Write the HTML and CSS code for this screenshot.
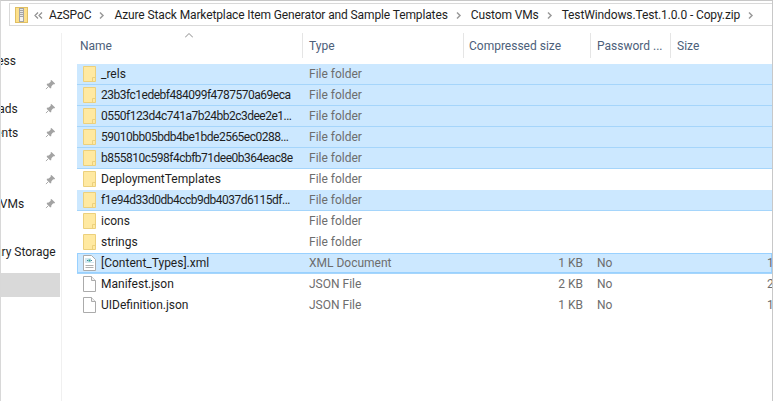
FILE: index.html
```html
<!DOCTYPE html>
<html>
<head>
  <title>TestWindows.Test.1.0.0 - Copy.zip</title>
  <link rel="stylesheet" href="styles.css">
</head>
<body>
  <svg class="defs" width="0" height="0">
    <symbol id="folder" viewBox="0 0 13 16">
      <path d="M0.500 0.500H12.500V15.500H0.500Z" fill="#ffe9a1" stroke="#ecd07c"/>
      <path d="M9.500 15V11.500H12" fill="none" stroke="#ecd07c"/>
    </symbol>
    <symbol id="page" viewBox="0 0 13 16">
      <path d="M0.500 0.500H8.500L12.500 4.500V15.500H0.500Z" fill="#fff" stroke="#ababab"/>
      <path d="M8.500 0.500V4.500H12.500" fill="#f0f0f0" stroke="#ababab"/>
    </symbol>
    <symbol id="xml" viewBox="0 0 13 16">
      <path d="M0.500 0.500H8.500L12.500 4.500V15.500H0.500Z" fill="#fff" stroke="#ababab"/>
      <path d="M2 3H8V7H11V8H2Z" fill="#d5e9f2"/>
      <path d="M4 5.500H5M8 5.500H9" stroke="#3f7f9f"/>
      <path d="M5.500 4.500H7.500V6.500H5.500Z" fill="#35a88c"/>
      <path d="M2.500 10.500H10.500M2.500 12.500H10.500" stroke="#b0b0b0"/>
    </symbol>
    <symbol id="pin" viewBox="0 0 12 12">
      <path d="M7 1l4 4-1 1-1-.3L7 8l-.3 2H5.500L2 6.500V5.300l2-.3 2.300-2L6 2z" fill="#a3a3a3"/>
      <path d="M3.500 8.500L1 11" stroke="#a3a3a3"/>
    </symbol>
    <symbol id="crumb" viewBox="0 0 6 7">
      <path d="M1 0.500L4 3.500L1 6.500" fill="none" stroke="#9a9a9a" stroke-width="1.500"/>
    </symbol>
  </svg>

  <div class="window">
    <div class="address">
      <svg class="zip" width="13" height="16" viewBox="0 0 13 16">
        <rect x="0.500" y="0.500" width="12" height="15" fill="#fde08a" stroke="#e0bf62"/>
        <rect x="4" y="1" width="5" height="14" fill="#a5a5a5"/>
        <path d="M5 2.500H8M5 4.500H8M5 6.500H8M5 8.500H8" stroke="#e6e6e6"/>
        <rect x="5" y="10" width="3" height="4" fill="#f2f2f2"/>
      </svg>
      <svg class="back" width="9" height="7" viewBox="0 0 9 7">
        <path d="M4 0.500L1 3.500L4 6.500M8 0.500L5 3.500L8 6.500" fill="none" stroke="#8f8f8f" stroke-width="1.200"/>
      </svg>
      <span class="crumb">AzSPoC</span>
      <svg class="arrow" width="6" height="7"><use href="#crumb"/></svg>
      <span class="crumb">Azure Stack Marketplace Item Generator and Sample Templates</span>
      <svg class="arrow" width="6" height="7"><use href="#crumb"/></svg>
      <span class="crumb">Custom VMs</span>
      <svg class="arrow" width="6" height="7"><use href="#crumb"/></svg>
      <span class="crumb">TestWindows.Test.1.0.0 - Copy.zip</span>
      <svg class="arrow" width="6" height="7"><use href="#crumb"/></svg>
    </div>

    <div class="main">
      <nav class="nav">
        <div class="nav-row"><span class="i-quick">Quick access</span></div>
        <div class="nav-row"><svg class="pin" width="11" height="11"><use href="#pin"/></svg></div>
        <div class="nav-row"><span class="i-down">Downloads</span><svg class="pin" width="11" height="11"><use href="#pin"/></svg></div>
        <div class="nav-row"><span class="i-docs">Documents</span><svg class="pin" width="11" height="11"><use href="#pin"/></svg></div>
        <div class="nav-row"><svg class="pin" width="11" height="11"><use href="#pin"/></svg></div>
        <div class="nav-row"><svg class="pin" width="11" height="11"><use href="#pin"/></svg></div>
        <div class="nav-row"><span class="i-vms">Custom VMs</span><svg class="pin" width="11" height="11"><use href="#pin"/></svg></div>
        <div class="nav-row"></div>
        <div class="nav-row"><span class="i-lib">Library Storage</span></div>
        <div class="nav-current"></div>
      </nav>

      <div class="files">
        <div class="head">
          <svg class="sort" width="8" height="5" viewBox="0 0 8 5"><path d="M0 4.500L4 0.500L8 4.500" fill="none" stroke="#8a8a8a"/></svg>
          <div class="hcell c-name">Name</div>
          <div class="hcell c-type">Type</div>
          <div class="hcell c-comp">Compressed size</div>
          <div class="hcell c-pass">Password ...</div>
          <div class="hcell c-size">Size</div>
        </div>

        <div class="row on">
          <div class="c-name name"><svg class="ico"><use href="#folder"/></svg>_rels</div>
          <div class="c-type cell">File folder</div>
        </div>
        <div class="row on">
          <div class="c-name name hash"><svg class="ico"><use href="#folder"/></svg>23b3fc1edebf484099f4787570a69eca</div>
          <div class="c-type cell">File folder</div>
        </div>
        <div class="row on">
          <div class="c-name name hash"><svg class="ico"><use href="#folder"/></svg>0550f123d4c741a7b24bb2c3dee2e1...</div>
          <div class="c-type cell">File folder</div>
        </div>
        <div class="row on">
          <div class="c-name name hash"><svg class="ico"><use href="#folder"/></svg>59010bb05bdb4be1bde2565ec0288...</div>
          <div class="c-type cell">File folder</div>
        </div>
        <div class="row on">
          <div class="c-name name hash"><svg class="ico"><use href="#folder"/></svg>b855810c598f4cbfb71dee0b364eac8e</div>
          <div class="c-type cell">File folder</div>
        </div>
        <div class="row">
          <div class="c-name name"><svg class="ico"><use href="#folder"/></svg>DeploymentTemplates</div>
          <div class="c-type cell">File folder</div>
        </div>
        <div class="row on">
          <div class="c-name name hash"><svg class="ico"><use href="#folder"/></svg>f1e94d33d0db4ccb9db4037d6115df...</div>
          <div class="c-type cell">File folder</div>
        </div>
        <div class="row">
          <div class="c-name name"><svg class="ico"><use href="#folder"/></svg>icons</div>
          <div class="c-type cell">File folder</div>
        </div>
        <div class="row">
          <div class="c-name name"><svg class="ico"><use href="#folder"/></svg>strings</div>
          <div class="c-type cell">File folder</div>
        </div>
        <div class="row on focus">
          <div class="c-name name"><svg class="ico"><use href="#xml"/></svg>[Content_Types].xml</div>
          <div class="c-type cell">XML Document</div>
          <div class="c-comp cell num">1 KB</div>
          <div class="c-pass cell">No</div>
          <div class="c-size cell val">1 KB</div>
        </div>
        <div class="row">
          <div class="c-name name"><svg class="ico"><use href="#page"/></svg>Manifest.json</div>
          <div class="c-type cell">JSON File</div>
          <div class="c-comp cell num">2 KB</div>
          <div class="c-pass cell">No</div>
          <div class="c-size cell val">2 KB</div>
        </div>
        <div class="row">
          <div class="c-name name"><svg class="ico"><use href="#page"/></svg>UIDefinition.json</div>
          <div class="c-type cell">JSON File</div>
          <div class="c-comp cell num">1 KB</div>
          <div class="c-pass cell">No</div>
          <div class="c-size cell val">1 KB</div>
        </div>
      </div>
    </div>
  </div>
</body>
</html>
```

FILE: styles.css
```css
* {
  box-sizing: border-box;
}

html, body {
  margin: 0;
  height: 100%;
  overflow: hidden;
  background: #fff;
}

body {
  font-family: Roboto, "Noto Sans", sans-serif;
  font-size: 12px;
  color: #1e1e1e;
}

.defs {
  display: block;
  height: 0;
}

.window {
  height: 401px;
  width: 773px;
  border-top: 1px solid #c8c8c8;
  border-left: 1px solid #d8d8d8;
  border-right: 1px solid #c8c8c8;
  overflow: hidden;
}

.address {
  display: flex;
  align-items: center;
  height: 23px;
  margin: 2px -1px 0 8px;
  padding-left: 5px;
  border: 1px solid #d9d9d9;
  border-right: 0;
  white-space: nowrap;
  overflow: hidden;
}

.zip {
  flex: none;
}

.back {
  flex: none;
  margin: 2px 6px 0 6px;
}

.crumb {
  letter-spacing: -0.12px;
}

.arrow {
  flex: none;
  margin: 1px 9px 0 8px;
}

.main {
  display: flex;
}

.nav {
  width: 61px;
  height: 369px;
  flex: none;
  margin-top: 7px;
  padding-top: 16px;
  border-right: 1px solid #f0f0f0;
  overflow: hidden;
}

.nav-row {
  display: flex;
  align-items: center;
  height: 23.900px;
  position: relative;
  white-space: nowrap;
}

.nav-row span {
  flex: none;
}

.i-quick { margin-left: -56px; }
.i-down { margin-left: -43px; }
.i-docs { margin-left: -44px; }
.i-vms { margin-left: -46px; }
.i-lib { margin-left: -26px; }

.pin {
  position: absolute;
  left: 44px;
  top: 6px;
}

.nav-current {
  height: 24px;
  width: 59px;
  margin-top: 9px;
  background: #d9d9d9;
}

.files {
  flex: 1;
  min-width: 0;
  padding-left: 15px;
}

.head {
  display: flex;
  height: 25px;
  margin-top: 7px;
  margin-bottom: 6px;
  position: relative;
}

.sort {
  position: absolute;
  left: 108px;
  top: 0;
}

.hcell {
  display: flex;
  align-items: center;
  color: #4c607a;
  border-right: 1px solid #e5e5e5;
}

.hcell:last-child {
  border-right: 0;
}

.c-name { width: 226px; flex: none; padding-left: 3px; }
.c-type { width: 161px; flex: none; padding-left: 6px; }
.c-comp { width: 127px; flex: none; padding-left: 5px; }
.c-pass { width: 80px; flex: none; padding-left: 6px; }
.c-size { flex: 1; padding-left: 6px; }

.row {
  display: flex;
  align-items: center;
  height: 21px;
  border-bottom: 1px solid transparent;
  white-space: nowrap;
  overflow: hidden;
}

.row.on {
  background: #cce8ff;
  border-bottom-color: #a5d5fb;
}

.row.focus {
  box-shadow: inset 0 0 0 1px #99d1ff;
}

.name {
  display: flex;
  align-items: center;
  padding-left: 6px;
}

.hash {
  letter-spacing: -0.5px;
}

.ico {
  flex: none;
  width: 13px;
  height: 16px;
  margin-right: 5px;
}

.cell {
  color: #6d6d6d;
}

.num {
  text-align: right;
  padding-right: 8px;
}

.val {
  padding-left: 96px;
}
```
